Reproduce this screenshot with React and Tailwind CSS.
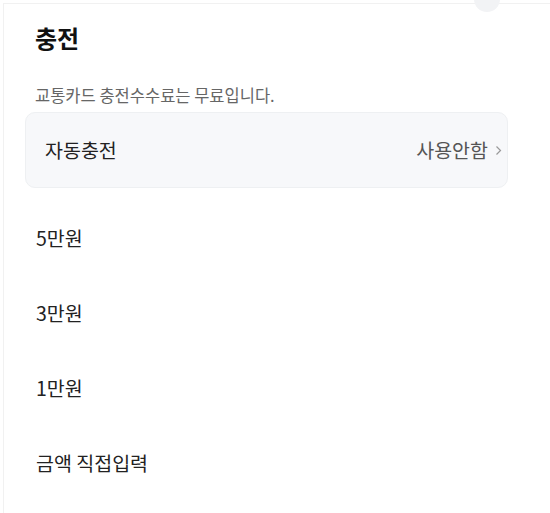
import React from "react";

export default function App() {
  const items = ["5만원", "3만원", "1만원", "금액 직접입력"];
  return (
    <div
      className="relative w-[550px] h-[513px] overflow-hidden bg-white"
      style={{ fontFamily: '"Noto Sans CJK KR", "Noto Sans", sans-serif' }}
    >
      <div className="absolute right-[50px] top-[-14px] w-[26px] h-[26px] rounded-full bg-[#f2f3f5]" />
      <div className="ml-[3px] mt-[3px] h-[510px] border-l border-t border-[#f1f1f1] pl-[21px] pt-[18px]">
        <h1 className="ml-[10px] text-[24px] font-bold leading-[32px] text-[#111]">충전</h1>
        <p className="ml-[10px] mt-[29px] text-[16.5px] leading-[24px] text-[#666]">
          교통카드 충전수수료는 무료입니다.
        </p>
        <div className="mt-[5px] flex h-[76px] w-[483px] items-center justify-between rounded-[10px] border border-[#eef0f2] bg-[#f7f8fa] pl-[19px] pr-[5px]">
          <span className="text-[19.5px] text-[#222]">자동충전</span>
          <span className="flex items-center gap-[7px] text-[19.5px] text-[#555]">
            사용안함
            <svg width="7" height="11" viewBox="0 0 7 11" fill="none">
              <path d="M1.5 1.5L5.5 5.5L1.5 9.5" stroke="#999" strokeWidth="1.2" />
            </svg>
          </span>
        </div>
        <div className="mt-[12px] flex flex-col">
          {items.map((t) => (
            <div key={t} className="ml-[11px] flex h-[75px] items-center text-[19.5px] text-[#222]">
              {t}
            </div>
          ))}
        </div>
      </div>
    </div>
  );
}
